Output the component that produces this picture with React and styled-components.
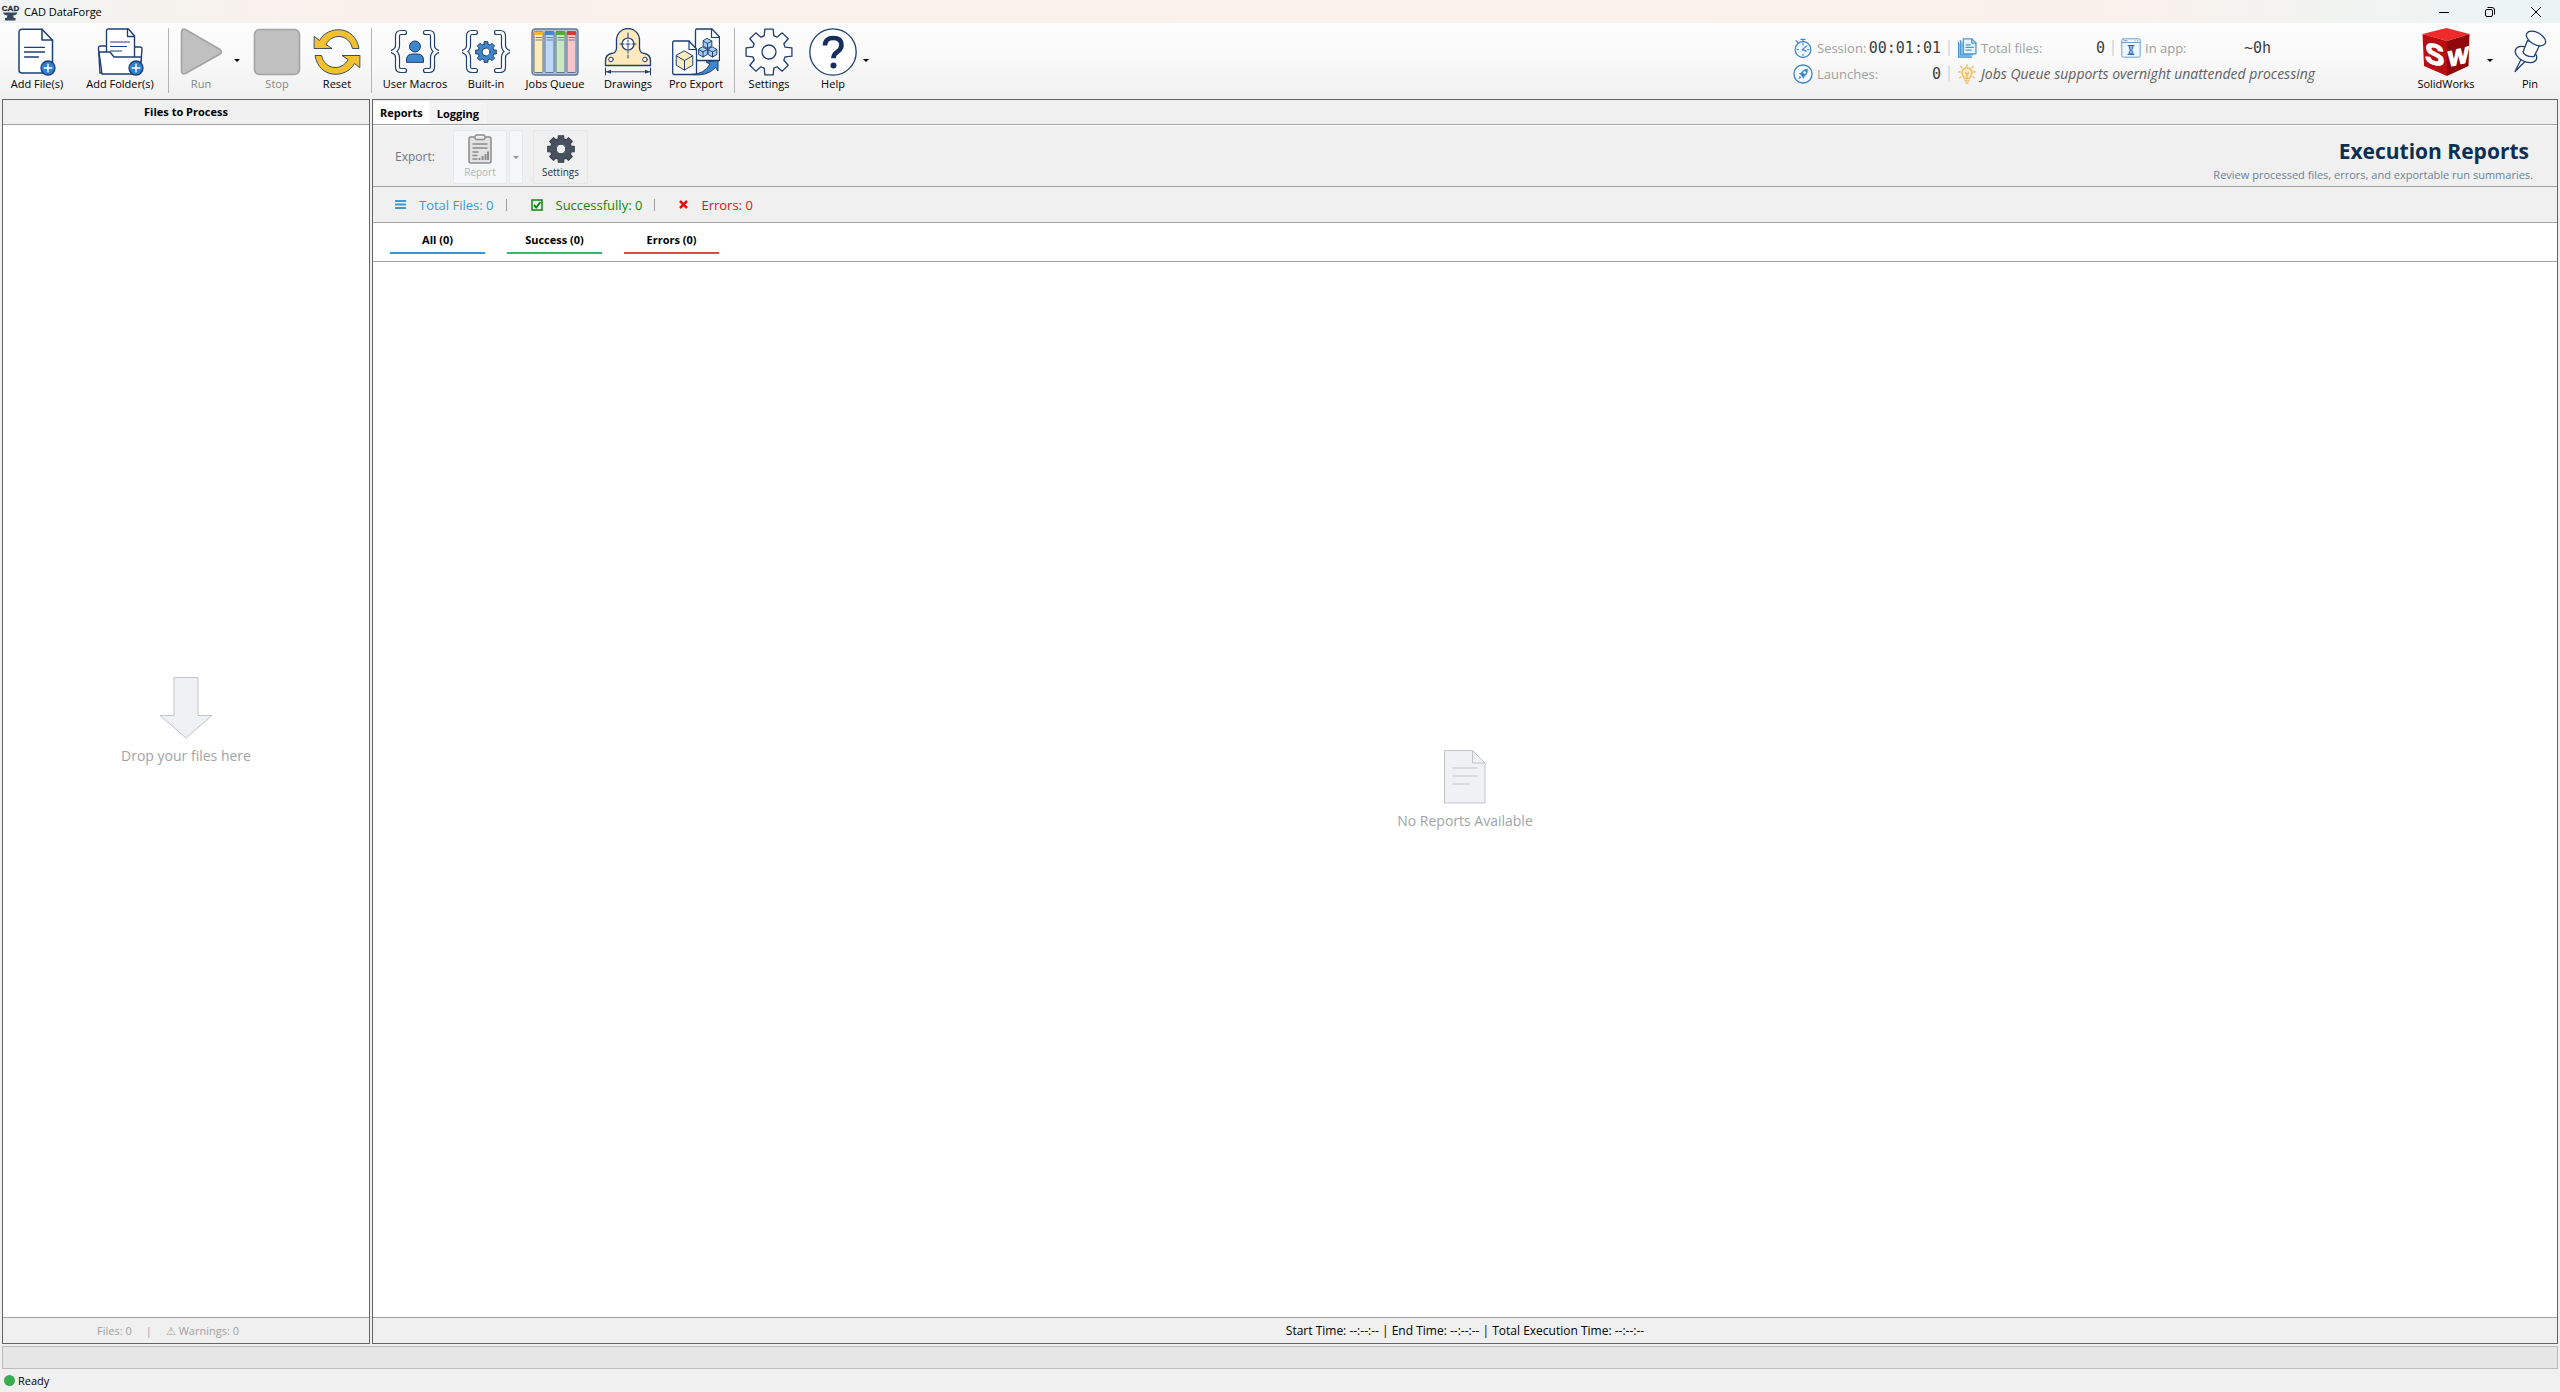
import styled, { createGlobalStyle } from 'styled-components'

const navy = '#1d3f72'
const blue = '#3f87cc'

const GlobalStyle = createGlobalStyle`
  * {
    box-sizing: border-box;
  }

  body {
    margin: 0;
    background: #f0f0f0;
    color: #000;
    font-family: 'Open Sans', 'Noto Sans', sans-serif;
    font-size: 11px;
    line-height: 16px;
  }

  button {
    border: 0;
    padding: 0;
    background: none;
    color: inherit;
    font: inherit;
  }
`

const Window = styled.div`
  display: flex;
  flex-direction: column;
  min-height: 100vh;
`

const TitleBar = styled.header`
  display: flex;
  align-items: center;
  height: 23px;
  padding-right: 1px;
  background: linear-gradient(90deg, #eff4f3 0%, #f4f2ee 5%, #faf0eb 14%, #faf1ea 60%, #faf0eb 82%, #f1f3f1 91%, #ebf4f5 100%);
`

const AppTitle = styled.h1`
  flex: 1;
  margin: 0 0 0 4px;
  font-size: 11px;
  font-weight: 400;
`

const WindowButton = styled.button`
  display: flex;
  align-items: center;
  justify-content: center;
  width: 46px;
  height: 20px;
`

const Toolbar = styled.div`
  display: flex;
  height: 76px;
  padding: 5px 6px 6px 8px;
  background: linear-gradient(#fdfdfd, #f9f9f9 50%, #f0f0f0);
`

const Group = styled.div`
  display: flex;
  gap: ${({ gap }) => gap || 8}px;
`

const Separator = styled.div`
  width: 1px;
  margin: 0 8px 0 10px;
  background: #b4b4b4;
`

const ToolButton = styled.button`
  display: flex;
  flex-direction: column;
  align-items: center;
  width: ${({ width }) => width}px;
  white-space: nowrap;

  &:disabled {
    color: #858585;
  }
`

const Split = styled.div`
  display: flex;
`

const Caret = styled.button`
  display: flex;
  align-items: center;
  justify-content: center;
  width: ${({ width }) => width || 24}px;
`

const Stats = styled.dl`
  display: grid;
  grid-template-columns: 148px 2px 148px 2px 150px 44px;
  grid-template-rows: 20px 20px;
  gap: 6px 7px;
  margin: 10px 92px 0 auto;
  font-size: 13px;
`

const Stat = styled.div`
  display: flex;
  align-items: center;
  white-space: nowrap;
`

const StatLabel = styled.dt`
  flex: 1;
  margin-left: 4px;
  color: #a0a0a0;
`

const StatValue = styled.dd`
  margin: 0;
  color: #404040;
  font-family: 'DejaVu Sans Mono', monospace;
  font-size: 15px;
`

const StatDivider = styled.div`
  height: 16px;
  align-self: center;
  background: #e0e0e0;
`

const Tip = styled(Stat)`
  grid-column: 3 / 7;
  gap: 4px;
  color: #606060;
  font-size: 14px;
  font-style: italic;
`

const Workspace = styled.main`
  flex: 1;
  display: grid;
  grid-template-columns: 368px 1fr;
  gap: 2px;
  padding: 0 2px;
`

const Panel = styled.section`
  display: flex;
  flex-direction: column;
  border: 1px solid #646464;
  background: #fff;
`

const PanelBar = styled.div`
  display: flex;
  align-items: center;
  height: 25px;
  border-bottom: 1px solid #a0a0a0;
  background: #f0f0f0;
`

const PanelTitle = styled.h2`
  flex: 1;
  margin: 0;
  font-size: 11px;
  font-weight: 700;
  text-align: center;
`

const PageTab = styled.button`
  align-self: flex-end;
  height: ${({ $active }) => ($active ? 23 : 21)}px;
  padding: 0 6px;
  border: 1px solid #f7f7f7;
  border-bottom: 0;
  background: ${({ $active }) => ($active ? '#fff' : '#f3f3f3')};
  font-weight: 700;
`

const EmptyState = styled.div`
  flex: 1;
  display: flex;
  flex-direction: column;
  align-items: center;
  justify-content: center;
  gap: 8px;
  color: #a0a4a8;
  font-size: 14px;
  line-height: 18px;
`

const PanelFooter = styled.footer`
  display: flex;
  align-items: center;
  justify-content: center;
  gap: ${({ gap }) => gap || 0}px;
  height: 26px;
  padding-right: ${({ inset }) => inset || 0}px;
  border-top: 1px solid #a0a0a0;
  background: #f0f0f0;
  color: ${({ $muted }) => ($muted ? '#a0a0a0' : '#000')};
  font-size: ${({ $muted }) => ($muted ? 11 : 12)}px;
  white-space: pre;
`

const ExportBar = styled.div`
  display: flex;
  align-items: center;
  height: 62px;
  padding: 2px 24px 0 22px;
  border-top: 1px solid #fff;
  border-bottom: 1px solid #a0a0a0;
  background: #f0f0f0;
`

const ExportLabel = styled.span`
  width: 58px;
  color: #6d7885;
  font-size: 12px;
`

const ExportButton = styled.button`
  display: flex;
  flex-direction: column;
  align-items: center;
  justify-content: center;
  width: ${({ width }) => width}px;
  height: 54px;
  margin-right: ${({ after }) => after || 0}px;
  border: 1px solid #e3e8ec;
  border-radius: 2px;
  background: ${({ disabled }) => (disabled ? '#f5f6f7' : '#f0f0f0')};
  color: ${({ disabled }) => (disabled ? '#b0b4b8' : '#22303e')};
  font-size: 10px;
`

const Heading = styled.div`
  margin-left: auto;
  padding-top: 8px;
  text-align: right;

  h2 {
    margin: 0 4px 0 0;
    color: #0c2f52;
    font-size: 21px;
    line-height: 28px;
  }

  p {
    margin: 0;
    color: #6b8299;
    font-size: 11px;
    line-height: 20px;
  }
`

const Summary = styled.div`
  display: flex;
  align-items: center;
  height: 36px;
  padding-left: 22px;
  border-bottom: 1px solid #a0a0a0;
  background: #f0f0f0;
  font-size: 13px;
`

const SummaryItem = styled.span`
  display: flex;
  align-items: center;
  gap: 13px;
  color: ${({ color }) => color};
`

const SummaryDivider = styled.span`
  width: 1px;
  height: 12px;
  margin: 0 24px 0 12px;
  background: #a0a0a0;
`

const FilterTabs = styled.nav`
  display: flex;
  gap: 22px;
  height: 39px;
  padding: 0 17px 7px;
  border-bottom: 1px solid #a0a0a0;
`

const FilterTab = styled.button`
  width: 95px;
  padding-top: 4px;
  border-bottom: 2px solid ${({ color }) => color};
  font-weight: 700;
`

const ProgressTrack = styled.div`
  height: 23px;
  margin: 2px 2px 0;
  border: 1px solid #bcbcbc;
  background: #e6e6e6;
`

const StatusBar = styled.footer`
  display: flex;
  align-items: center;
  gap: 3px;
  height: 23px;
  padding-left: 4px;
`

const StatusDot = styled.span`
  width: 11px;
  height: 11px;
  border-radius: 50%;
  background: #3aab52;
`

function gearPath(c, outer, inner, teeth, tip, root) {
  const step = (Math.PI * 2) / teeth
  const at = (r, a) => `${(c + r * Math.sin(a)).toFixed(2)} ${(c - r * Math.cos(a)).toFixed(2)}`
  let d = ''
  for (let i = 0; i < teeth; i++) {
    const a = i * step
    d += `${i ? 'L' : 'M'}${at(inner, a - root)} L${at(outer, a - tip)} L${at(outer, a + tip)} L${at(inner, a + root)} `
    d += `A${inner} ${inner} 0 0 1 ${at(inner, a + step - root)} `
  }
  return d + 'Z'
}

function Icon({ size = 48, box = 48, children }) {
  return (
    <svg width={size} height={size} viewBox={`0 0 ${box} ${box}`} fill='none' strokeLinejoin='round' strokeLinecap='round' aria-hidden='true'>
      {children}
    </svg>
  )
}

function Arrow({ color = '#000' }) {
  return (
    <svg width='6' height='3' viewBox='0 0 6 3' aria-hidden='true'>
      <path d='M0 0h6L3 3z' fill={color} />
    </svg>
  )
}

function PlusBadge({ cx }) {
  return (
    <>
      <circle cx={cx} cy='40' r='7' fill='#2f80d0' stroke={navy} strokeWidth='1.3' />
      <path d={`M${cx - 3.8} 40h7.6M${cx} 36.2v7.6`} stroke='#fff' strokeWidth='1.5' />
    </>
  )
}

function AddFileIcon() {
  return (
    <Icon>
      <path d='M9 1.2h20l10.5 11V42a3 3 0 0 1-3 3H9a3 3 0 0 1-3-3V4.2a3 3 0 0 1 3-3z' fill='#fff' stroke={navy} strokeWidth='1.5' />
      <path d='M29 1.2V12h10.5' stroke={navy} strokeWidth='1.5' />
      <path d='M11.5 19.3h20M11.5 24h20M11.5 29h14' stroke={navy} strokeWidth='1.3' />
      <PlusBadge cx={35} />
    </Icon>
  )
}

function AddFolderIcon() {
  return (
    <Icon>
      <path d='M4 45 2.5 20a2 2 0 0 1 2-2H10l3 3h23l2-2h6a2 2 0 0 1 2 2L44 45z' fill='#fff' stroke={navy} strokeWidth='1.4' />
      <path d='M12.5 1h20L38.5 8v26h-28V3a2 2 0 0 1 2-2z' fill='#fff' stroke={navy} strokeWidth='1.4' />
      <path d='M31.5 1v7.5h7' stroke={navy} strokeWidth='1.3' />
      <path d='M14.5 14h19M14.5 18.5h16M14.5 23h11' stroke={navy} strokeWidth='1.2' />
      <path d='M3 24h11l4 5h27.5L43 46H6z' fill='#fff' stroke={navy} strokeWidth='1.4' />
      <PlusBadge cx={40} />
    </Icon>
  )
}

function RunIcon() {
  return (
    <Icon>
      <path d='M4.5 4.5v38.5q0 4 4 2.5L43 26q3-2 0-4.5L8.5 1.5q-4-1.500-4 3z' fill='#c0c0c0' stroke='#a3a3a3' strokeWidth='1.6' />
    </Icon>
  )
}

function StopIcon() {
  return (
    <Icon>
      <rect x='1.5' y='1.5' width='45' height='45' rx='5' fill='#c0c0c0' stroke='#a3a3a3' strokeWidth='1.6' />
    </Icon>
  )
}

function ResetIcon() {
  return (
    <Icon>
      <g fill='#f3c12f' stroke='#3b5163' strokeWidth='1'>
        <path d='M1.5 8.5 6.5 12.5C15-3 42-3 46 20.5H39.5C36 5.5 18.5 5 13 16.5L19 20.5H1.5z' />
        <path d='M46.5 39.5 41.5 35.5C33 51 6 51 2 27.5H8.5C12 42.5 29.5 43 35 31.5L29 27.5H46.5z' />
      </g>
    </Icon>
  )
}

function Braces() {
  const left = 'M13.5 4.5H10Q6.5 4.5 6.5 8v9.5Q6.5 21.5 2.5 23.5 6.5 25.5 6.5 29.5V39Q6.5 42.5 10 42.5h3.5'
  const right = 'M34.5 4.5H38Q41.5 4.5 41.5 8v9.5Q41.5 21.5 45.5 23.5 41.5 25.5 41.5 29.5V39Q41.5 42.5 38 42.5h-3.5'
  return (
    <>
      <path d={left + right} stroke={navy} strokeWidth='5.2' strokeLinejoin='miter' />
      <path d={left + right} stroke='#fff' strokeWidth='2.8' strokeLinejoin='miter' />
    </>
  )
}

function MacrosIcon() {
  return (
    <Icon>
      <Braces />
      <circle cx='24' cy='18.5' r='5.5' fill={blue} stroke={navy} strokeWidth='1' />
      <path d='M15.5 34v-2q0-6 6-6h5q6 0 6 6v2z' fill={blue} stroke={navy} strokeWidth='1' />
    </Icon>
  )
}

function BuiltInIcon() {
  return (
    <Icon>
      <Braces />
      <path d={gearPath(24, 10.5, 8, 8, 0.19, 0.24)} fill={blue} stroke={navy} strokeWidth='1' />
      <circle cx='24' cy='24' r='4' fill='#fff' stroke={navy} strokeWidth='1' />
    </Icon>
  )
}

function QueueIcon() {
  const columns = [['#f0b92c', '#fdebb8'], ['#3f87cc', '#bcd8f6'], ['#51a93d', '#c9e9c2'], ['#d8373c', '#f8c5c8']]
  return (
    <Icon>
      <rect x='1' y='1' width='46' height='46' rx='3' fill='#b9c5d4' stroke='#5b7595' strokeWidth='1.3' />
      {columns.map(([head, fill], i) => (
        <g key={head} transform={`translate(${3 + i * 11} 0)`}>
          <rect x='0' y='3.5' width='9' height='41' rx='1' fill={fill} stroke='#5b7595' strokeWidth='1' />
          <rect x='0' y='3.5' width='9' height='3.5' fill={head} />
          <path d='M2 9.5h5.5M2 12h5.5' stroke='#5b7595' strokeWidth='0.9' />
        </g>
      ))}
    </Icon>
  )
}

function DrawingsIcon() {
  return (
    <Icon>
      <path d='M12.5 20V12a11.5 11.5 0 0 1 23 0v8q0 5 5 5.5 6 1 6 7.5v4.5h-45V33q0-6.5 6-7.5 5-.5 5-5.5z' fill='#fde9bd' stroke={navy} strokeWidth='1.3' />
      <circle cx='24' cy='16' r='6' fill='#fff' stroke={navy} strokeWidth='1.2' />
      <path d='M24 5v25' stroke={navy} strokeWidth='1' strokeDasharray='5 2 2 2' />
      <path d='M16 16h16' stroke={navy} strokeWidth='1' strokeDasharray='4 2' />
      <circle cx='7' cy='31.5' r='2.3' fill='#fff' stroke={navy} strokeWidth='1' />
      <circle cx='41' cy='31.5' r='2.3' fill='#fff' stroke={navy} strokeWidth='1' />
      <path d='M1.5 40v7M46.5 40v7M2 43.8h44' stroke={navy} strokeWidth='1' />
      <path d='M2 43.8l5-2v4zM46 43.8l-5-2v4z' fill={navy} />
    </Icon>
  )
}

function Cube({ x, y, r, fill }) {
  const w = r * 0.87
  const h = r / 2
  return (
    <g transform={`translate(${x} ${y})`} stroke={navy} strokeWidth='1'>
      <path d={`M0 ${-r}L${w} ${-h}V${h}L0 ${r}L${-w} ${h}V${-h}Z`} fill={fill} />
      <path d={`M${-w} ${-h}L0 0L${w} ${-h}M0 0V${r}`} />
    </g>
  )
}

function ExportIcon() {
  return (
    <Icon>
      <path d='M25 1h15l7.5 8v23.5H23.5V2.5A1.5 1.5 0 0 1 25 1z' fill='#fff' stroke={navy} strokeWidth='1.3' />
      <path d='M39.5 1v8.5h8' stroke={navy} strokeWidth='1.2' />
      <path d='M2 13h15l7.5 8v24a1.5 1.5 0 0 1-1.5 1.5H2A1.5 1.5 0 0 1 .7 45V14.5A1.5 1.5 0 0 1 2 13z' fill='#fff' stroke={navy} strokeWidth='1.3' />
      <path d='M17 13v8.5h7.5' stroke={navy} strokeWidth='1.2' />
      <Cube x={12.5} y={32.5} r={9.5} fill='#fdebb8' />
      <Cube x={35.5} y={15.5} r={5} fill='#a9cff3' />
      <Cube x={31} y={24} r={5} fill='#a9cff3' />
      <Cube x={40.5} y={24} r={5} fill='#a9cff3' />
      <path d='M18.5 46.5q14 0 19.5-10.5l-4-2L46 32.5V43l-2.5-3.5Q35 49 18.5 46.5z' fill={blue} stroke={navy} strokeWidth='1' />
    </Icon>
  )
}

function SettingsIcon() {
  return (
    <Icon>
      <path d={gearPath(24, 23.3, 16.8, 8, 0.18, 0.29)} fill='#fff' stroke={navy} strokeWidth='1.3' />
      <circle cx='24' cy='24' r='7' fill='#fafafa' stroke={navy} strokeWidth='1.3' />
    </Icon>
  )
}

function HelpIcon() {
  return (
    <Icon>
      <circle cx='24' cy='24' r='23.2' fill='#fff' stroke={navy} strokeWidth='1.3' />
      <path d='M16 17.5q0-7.5 8.2-7.5 8.3 0 8.3 7 0 4-4.5 7.2-3.5 2.3-3.5 6' stroke='#152f5c' strokeWidth='4.6' strokeLinecap='butt' />
      <circle cx='24.5' cy='37.5' r='3' fill='#152f5c' />
    </Icon>
  )
}

function SolidWorksIcon() {
  return (
    <Icon>
      <path d='M.5 6 24.5 0l23 6L25 13z' fill='#ee2a2a' />
      <path d='M.5 6 25 13v35L2 38z' fill='#b80d12' />
      <path d='M47.5 6 25 13v35l21.5-10z' fill='#8f060b' />
      <g fill='#fff' stroke='#fff' strokeWidth='1.2' fontFamily='Liberation Sans, sans-serif' fontWeight='700'>
        <text transform='matrix(1 .25 0 1 3 34)' fontSize='29'>S</text>
        <text transform='matrix(1 -.25 0 1 26 39)' fontSize='22'>W</text>
      </g>
    </Icon>
  )
}

function PinIcon() {
  return (
    <Icon>
      <g fill='#fff' stroke={navy} strokeWidth='1.3'>
        <path d='M15.5 30.5 9 43.5l11-11z' />
        <ellipse cx='20' cy='26.5' rx='11.5' ry='7' transform='rotate(27 20 26.5)' />
        <path d='M21.5 12.5 17 24q2 5 11 4.5l5.5-11z' />
        <ellipse cx='30' cy='10.5' rx='10.5' ry='6' transform='rotate(30 30 10.5)' />
      </g>
    </Icon>
  )
}

function LogoIcon() {
  return (
    <Icon size={20} box={20}>
      <text x='10.5' y='8.5' fontSize='8' fontWeight='700' fontFamily='Liberation Sans, sans-serif' textAnchor='middle' fill='#222f3e' stroke='#222f3e' strokeWidth='.3'>CAD</text>
      <path d='M3 10.5h14.5q-1 3-4.500 3l1 2.500h1.500V18.500H5V16h1.500l1-2.500Q4 13.500 3 10.5z' fill='#34495e' />
    </Icon>
  )
}

function SessionIcon() {
  return (
    <Icon size={20} box={19}>
      <g stroke={blue} strokeWidth='1.2'>
        <circle cx='9.5' cy='11' r='7.5' fill='#f1f8fe' />
        <path d='M7.5 1.2h4M9.5 1.5v2M3 2.5l1.5 2M9.5 5.5v1M9.5 15.5v1M4 11h1M14 11h1M13 7.5l-4 3.5 3.5 1.5' />
      </g>
    </Icon>
  )
}

function FilesIcon() {
  return (
    <Icon size={20} box={19}>
      <g stroke='#4b97d3' strokeWidth='1.2'>
        <path d='M1.5 4v14.2H14M3.5 2.5V16H15' fill='#9fcdf2' />
        <path d='M6 .8h8l4 4V15H6z' fill='#e8f4fd' />
        <path d='M14 .8v4h4M8.5 6.5h4M8.5 9h7M8.5 11.5h5' />
      </g>
    </Icon>
  )
}

function InAppIcon() {
  return (
    <Icon size={20} box={20}>
      <g stroke='#6ba3da' strokeWidth='1'>
        <rect x='.8' y='.8' width='18.4' height='18.4' rx='1.5' fill='#eef5fc' />
        <path d='M1 4.5h18M3 2.7h3M14 2.7h.1M16.5 2.7h.1' />
        <path d='M7 7.5h6M7 16.5h6' stroke='#2f6fb0' />
        <path d='M8 8q0 3 1.500 4-1.500 1-1.500 4h4q0-3-1.500-4 1.500-1 1.500-4z' fill='#7fb4e4' stroke='#2f6fb0' />
      </g>
    </Icon>
  )
}

function LaunchIcon() {
  return (
    <Icon size={20} box={19}>
      <circle cx='9.5' cy='9.5' r='8.6' stroke={blue} strokeWidth='1.3' fill='#f4f9fe' />
      <path d='M14 4.5q-4 0-6 3.5l-2.5 1 1.5 1 2 2.5 1 1.5 1.2-2.5Q14.5 9 14 4.5zM6.5 11.5l-1.5 3 3-1.5z' fill={blue} />
      <circle cx='11' cy='8' r='1.2' fill='#fff' />
    </Icon>
  )
}

function TipIcon() {
  return (
    <Icon size={20} box={19}>
      <g stroke='#f3b04c' strokeWidth='1.1'>
        <path d='M7 14q0-1.5-1.5-3a4.8 4.8 0 1 1 8 0Q12 12.5 12 14z' fill='#fde8bd' />
        <path d='M7.5 16h4M8.5 18.2h2M9.5 14V10L8 8.5M9.5 10 11 8.5M9.5 .6v1.6M3.5 2.5l1.3 1.3M15.5 2.5l-1.3 1.3M1.5 7.5h1.7M15.8 7.5h1.7M2.5 13l1.3-.8M16.5 13l-1.3-.8' />
      </g>
    </Icon>
  )
}

function ReportIcon() {
  return (
    <Icon size={30} box={30}>
      <rect x='4' y='3' width='22' height='26' rx='2' fill='#e2e2e2' stroke='#8b8b8b' strokeWidth='1.5' />
      <rect x='10' y='1' width='10' height='4.5' rx='1.5' fill='#f2f2f2' stroke='#8b8b8b' strokeWidth='1.3' />
      <path d='M8 10h14M8 14h14M8 18h5M8 21.5h4M8 25h4' stroke='#8b8b8b' strokeWidth='1.4' />
      <path d='M14.5 24v2M17.5 22v4M20.5 20v6M23 17.5V26' stroke='#858585' strokeWidth='1.8' strokeLinecap='butt' />
    </Icon>
  )
}

function DarkGearIcon() {
  return (
    <Icon size={30} box={30}>
      <path d={gearPath(15, 13.5, 10.5, 8, 0.2, 0.27)} fill='#48515e' stroke='#3a434f' strokeWidth='1.2' />
      <circle cx='15' cy='15' r='4.8' fill='#f0f0f0' stroke='#3a434f' />
    </Icon>
  )
}

function Tool({ label, width, icon, disabled }) {
  return (
    <ToolButton width={width} disabled={disabled}>
      {icon}
      {label}
    </ToolButton>
  )
}

function StatItem({ icon, label, value }) {
  return (
    <Stat>
      {icon}
      <StatLabel>{label}</StatLabel>
      <StatValue>{value}</StatValue>
    </Stat>
  )
}

function App() {
  return (
    <Window>
      <GlobalStyle />
      <TitleBar>
        <LogoIcon />
        <AppTitle>CAD DataForge</AppTitle>
        <WindowButton aria-label='Minimize'>
          <svg width='10' height='10'><path d='M0 5.5h10' stroke='#000' /></svg>
        </WindowButton>
        <WindowButton aria-label='Restore'>
          <svg width='10' height='10' fill='none' stroke='#000'>
            <rect x='.5' y='2.5' width='7' height='7' rx='1.5' />
            <path d='M2.5 .5H7A2.5 2.5 0 0 1 9.5 3v4.5' />
          </svg>
        </WindowButton>
        <WindowButton aria-label='Close'>
          <svg width='10' height='10'><path d='M0 0l10 10M10 0L0 10' stroke='#000' /></svg>
        </WindowButton>
      </TitleBar>

      <Toolbar>
        <Group gap={16}>
          <Tool label='Add File(s)' width={58} icon={<AddFileIcon />} />
          <Tool label='Add Folder(s)' width={76} icon={<AddFolderIcon />} />
        </Group>
        <Separator />
        <Group>
          <Split>
            <Tool label='Run' width={48} icon={<RunIcon />} disabled />
            <Caret aria-label='Run options'><Arrow /></Caret>
            <Tool label='Stop' width={56} icon={<StopIcon />} disabled />
          </Split>
          <Tool label='Reset' width={48} icon={<ResetIcon />} />
        </Group>
        <Separator />
        <Group>
          <Tool label='User Macros' width={70} icon={<MacrosIcon />} />
          <Tool label='Built-in' width={56} icon={<BuiltInIcon />} />
          <Tool label='Jobs Queue' width={66} icon={<QueueIcon />} />
          <Tool label='Drawings' width={64} icon={<DrawingsIcon />} />
          <Tool label='Pro Export' width={56} icon={<ExportIcon />} />
        </Group>
        <Separator />
        <Group gap={13}>
          <Tool label='Settings' width={52} icon={<SettingsIcon />} />
          <Split>
            <Tool label='Help' width={50} icon={<HelpIcon />} />
            <Caret aria-label='Help options' width={16}><Arrow /></Caret>
          </Split>
        </Group>

        <Stats>
          <StatItem icon={<SessionIcon />} label='Session:' value='00:01:01' />
          <StatDivider />
          <StatItem icon={<FilesIcon />} label='Total files:' value='0' />
          <StatDivider />
          <StatItem icon={<InAppIcon />} label='In app:' value='~0h' />
          <span />
          <StatItem icon={<LaunchIcon />} label='Launches:' value='0' />
          <StatDivider />
          <Tip>
            <TipIcon />
            Jobs Queue supports overnight unattended processing
          </Tip>
        </Stats>

        <Group gap={4}>
          <Split>
            <Tool label='SolidWorks' width={64} icon={<SolidWorksIcon />} />
            <Caret aria-label='CAD system'><Arrow /></Caret>
          </Split>
          <Tool label='Pin' width={48} icon={<PinIcon />} />
        </Group>
      </Toolbar>

      <Workspace>
        <Panel>
          <PanelBar>
            <PanelTitle>Files to Process</PanelTitle>
          </PanelBar>
          <EmptyState>
            <svg width='54' height='62' aria-hidden='true'>
              <path d='M15 .5h24v38h14L27 61 1 38.5h14z' fill='#f0f1f5' stroke='#c3c4c6' />
            </svg>
            Drop your files here
          </EmptyState>
          <PanelFooter $muted gap={14} inset={36}>
            <span>Files: 0</span>
            <span>|</span>
            <span>⚠ Warnings: 0</span>
          </PanelFooter>
        </Panel>

        <Panel>
          <PanelBar role='tablist'>
            <PageTab role='tab' $active>Reports</PageTab>
            <PageTab role='tab'>Logging</PageTab>
          </PanelBar>
          <ExportBar>
            <ExportLabel>Export:</ExportLabel>
            <ExportButton width={54} after={2} disabled>
              <ReportIcon />
              Report
            </ExportButton>
            <ExportButton width={14} after={10} disabled aria-label='Report options'>
              <Arrow color='#8f97a3' />
            </ExportButton>
            <ExportButton width={55}>
              <DarkGearIcon />
              Settings
            </ExportButton>
            <Heading>
              <h2>Execution Reports</h2>
              <p>Review processed files, errors, and exportable run summaries.</p>
            </Heading>
          </ExportBar>
          <Summary>
            <SummaryItem color='#3d9ad6'>
              <svg width='11' height='9' stroke='#3d9ad6' strokeWidth='2'><path d='M0 1h11M0 4.5h11M0 8h11' /></svg>
              Total Files: 0
            </SummaryItem>
            <SummaryDivider />
            <SummaryItem color='#0a8a0a'>
              <svg width='12' height='12' fill='none' stroke='#0a8a0a'>
                <rect x='1' y='1' width='10' height='10' strokeWidth='1.5' />
                <path d='M3 6l2.2 2.5L9.5 3' strokeWidth='2' />
              </svg>
              Successfully: 0
            </SummaryItem>
            <SummaryDivider />
            <SummaryItem color='#e81010'>
              <svg width='9' height='9' stroke='#e81010' strokeWidth='2.5'><path d='M1 1l7 7M8 1L1 8' /></svg>
              Errors: 0
            </SummaryItem>
          </Summary>
          <FilterTabs>
            <FilterTab color='#3498db'>All (0)</FilterTab>
            <FilterTab color='#2ebd6e'>Success (0)</FilterTab>
            <FilterTab color='#dc4c3e'>Errors (0)</FilterTab>
          </FilterTabs>
          <EmptyState>
            <svg width='42' height='54' fill='#f0f1f5' stroke='#c3c4c6' aria-hidden='true'>
              <path d='M.5 .5h28l12.5 12.5v40H.5z' />
              <path d='M28.5 .5V13H41M8.5 18h25M8.5 26h25M8.5 34h17' fill='none' />
            </svg>
            No Reports Available
          </EmptyState>
          <PanelFooter>
            Start Time: --:--:-- | End Time: --:--:-- | Total Execution Time: --:--:--
          </PanelFooter>
        </Panel>
      </Workspace>

      <ProgressTrack role='progressbar' aria-label='Progress' aria-valuenow={0} />
      <StatusBar>
        <StatusDot />
        Ready
      </StatusBar>
    </Window>
  )
}

export default App
